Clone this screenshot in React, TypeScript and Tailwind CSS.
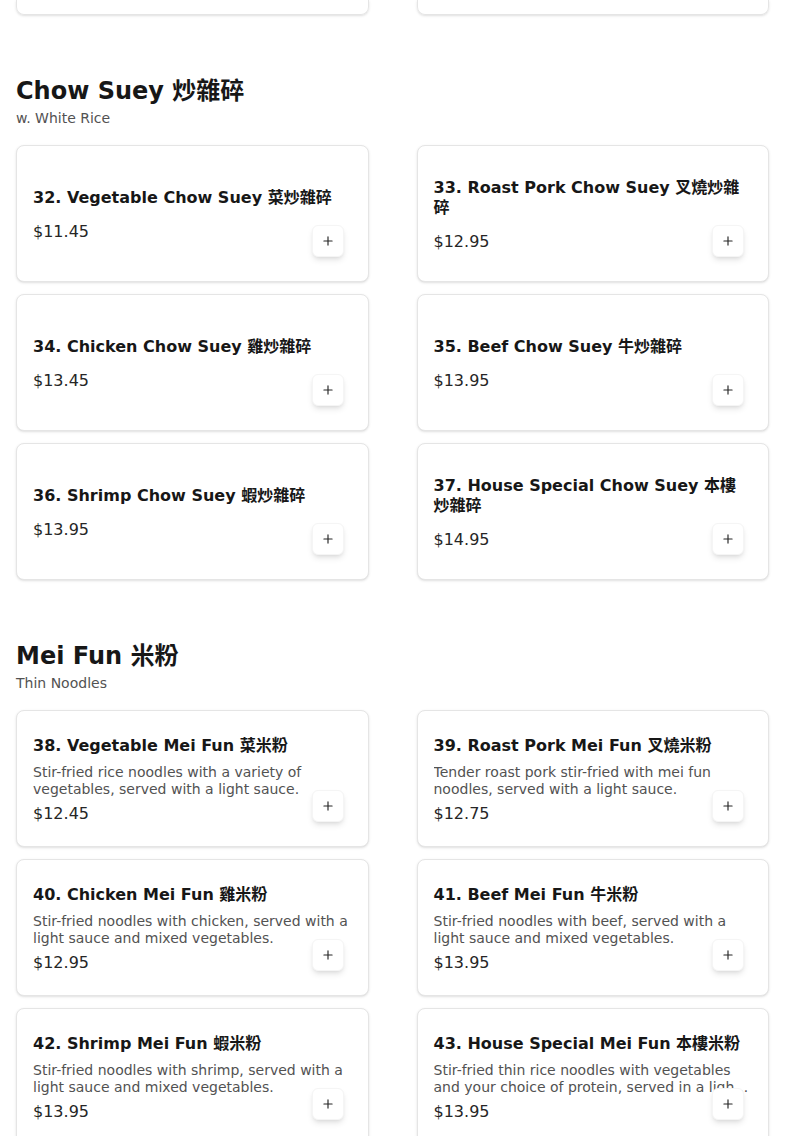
import { Plus } from 'lucide-react';

type Item = { name: string; price: string; desc?: string };

const chowSuey: Item[] = [
  { name: '32. Vegetable Chow Suey 菜炒雜碎', price: '$11.45' },
  { name: '33. Roast Pork Chow Suey 叉燒炒雜碎', price: '$12.95' },
  { name: '34. Chicken Chow Suey 雞炒雜碎', price: '$13.45' },
  { name: '35. Beef Chow Suey 牛炒雜碎', price: '$13.95' },
  { name: '36. Shrimp Chow Suey 蝦炒雜碎', price: '$13.95' },
  { name: '37. House Special Chow Suey 本樓炒雜碎', price: '$14.95' },
];

const meiFun: Item[] = [
  {
    name: '38. Vegetable Mei Fun 菜米粉',
    price: '$12.45',
    desc: 'Stir-fried rice noodles with a variety of vegetables, served with a light sauce.',
  },
  {
    name: '39. Roast Pork Mei Fun 叉燒米粉',
    price: '$12.75',
    desc: 'Tender roast pork stir-fried with mei fun noodles, served with a light sauce.',
  },
  {
    name: '40. Chicken Mei Fun 雞米粉',
    price: '$12.95',
    desc: 'Stir-fried noodles with chicken, served with a light sauce and mixed vegetables.',
  },
  {
    name: '41. Beef Mei Fun 牛米粉',
    price: '$13.95',
    desc: 'Stir-fried noodles with beef, served with a light sauce and mixed vegetables.',
  },
  {
    name: '42. Shrimp Mei Fun 蝦米粉',
    price: '$13.95',
    desc: 'Stir-fried noodles with shrimp, served with a light sauce and mixed vegetables.',
  },
  {
    name: '43. House Special Mei Fun 本樓米粉',
    price: '$13.95',
    desc: 'Stir-fried thin rice noodles with vegetables and your choice of protein, served in a light sauce.',
  },
];

function MenuCard({ item }: { item: Item }) {
  return (
    <div className="relative flex h-[137px] flex-col justify-center rounded-lg border border-neutral-200 bg-white px-4 pt-1 shadow-sm">
      <h3 className="text-base font-bold leading-tight text-neutral-900">{item.name}</h3>
      <p className="mt-2 line-clamp-2 text-sm leading-[17px] text-neutral-600">{item.desc}</p>
      <p className="mt-1 text-base leading-6 text-neutral-800">{item.price}</p>
      <button className="absolute bottom-6 right-6 flex h-8 w-8 items-center justify-center rounded-md border border-neutral-100 bg-white text-neutral-800 shadow-md">
        <Plus size={14} strokeWidth={2} />
      </button>
    </div>
  );
}

function Section({ title, subtitle, items }: { title: string; subtitle: string; items: Item[] }) {
  return (
    <section className="mt-[60px]">
      <h2 className="text-2xl font-bold leading-8 text-neutral-900">{title}</h2>
      <p className="mt-px text-sm leading-5 text-neutral-600">{subtitle}</p>
      <div className="mt-[17px] grid grid-cols-2 gap-x-12 gap-y-3">
        {items.map((item) => (
          <MenuCard key={item.name} item={item} />
        ))}
      </div>
    </section>
  );
}

export default function App() {
  return (
    <div className="min-h-screen bg-white px-4 font-['DejaVu_Sans','Noto_Sans_CJK_TC',sans-serif]">
      {/* tail of the previous section, scrolled past */}
      <div className="grid grid-cols-2 gap-x-12">
        <div className="h-[15px] rounded-b-lg border border-t-0 border-neutral-200 shadow-sm" />
        <div className="h-[15px] rounded-b-lg border border-t-0 border-neutral-200 shadow-sm" />
      </div>

      <Section title="Chow Suey 炒雜碎" subtitle="w. White Rice" items={chowSuey} />
      <Section title="Mei Fun 米粉" subtitle="Thin Noodles" items={meiFun} />
    </div>
  );
}
